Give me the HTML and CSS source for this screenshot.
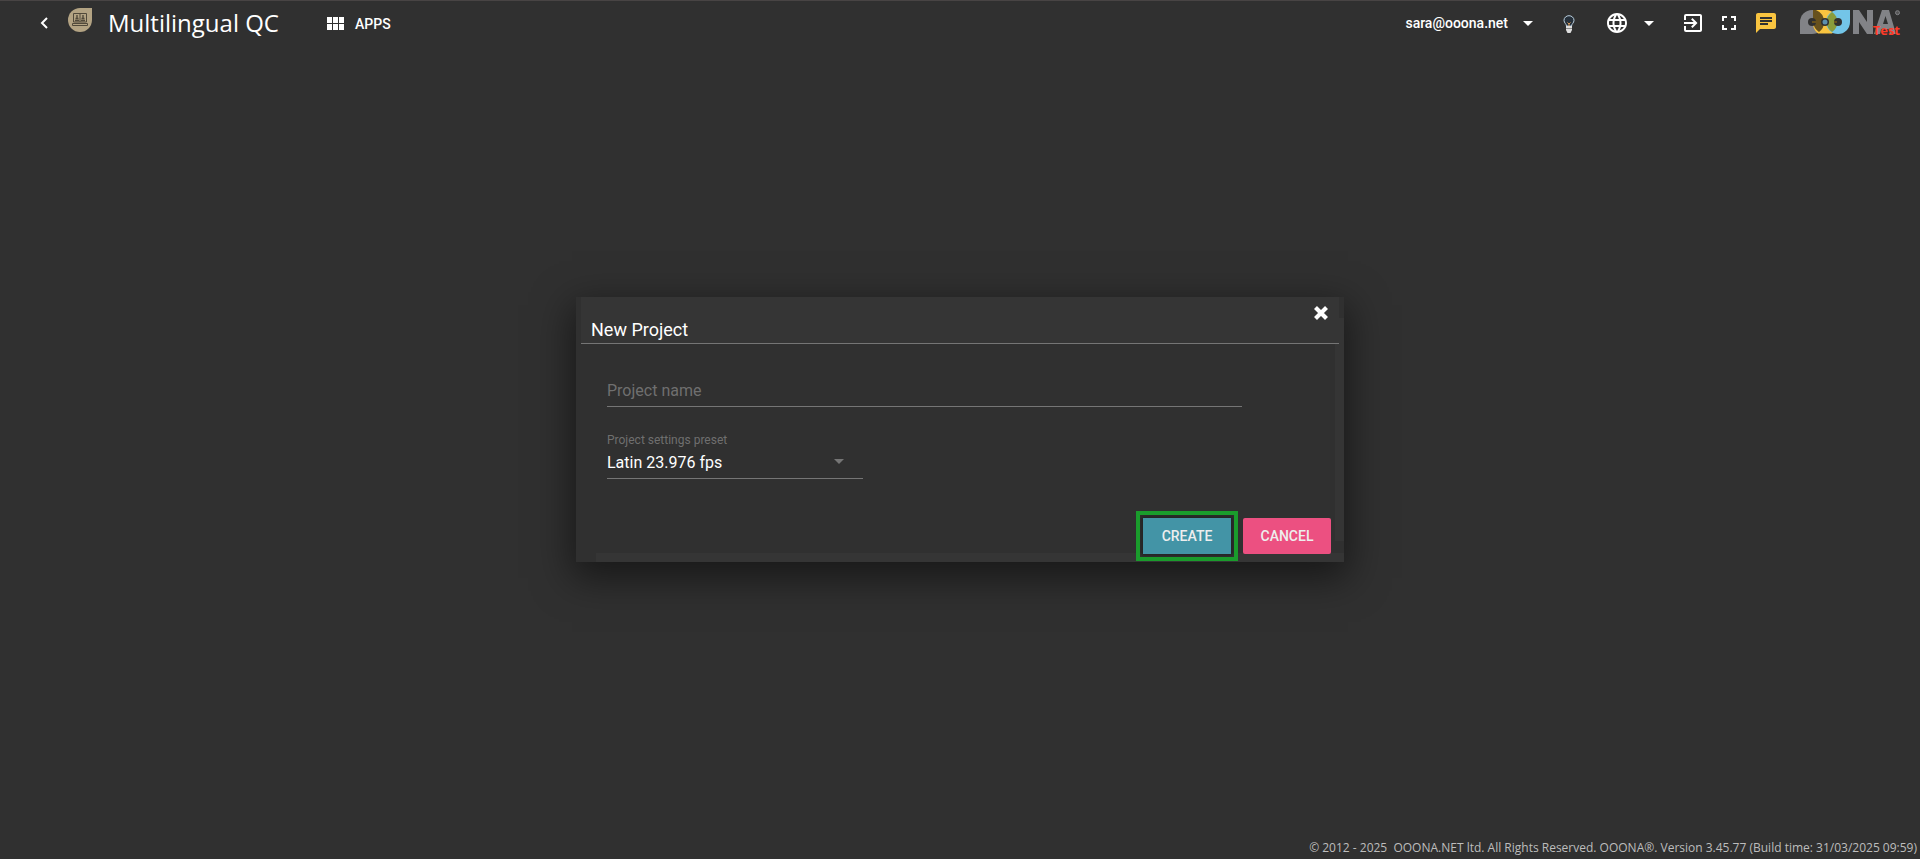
FILE: index.html
```
<!DOCTYPE html>
<html lang="en">
<head>
  <meta charset="UTF-8">
  <title>Multilingual QC</title>
  <link rel="stylesheet" href="styles.css">
</head>
<body>

<header class="topbar">
  <button class="icon-btn back" aria-label="Back">
    <svg width="8" height="12" viewBox="0 0 8 12"><path d="M7 1L2 6l5 5" fill="none" stroke="#fff" stroke-width="2"/></svg>
  </button>
  <svg class="app-logo" width="24" height="24" viewBox="0 0 24 24">
    <path d="M12 0h12v12a12 12 0 1 1-12-12z" fill="#b3a383"/>
    <g fill="none" stroke="#51493a">
      <path d="M5.500 14V5.500h13V14zM12 5.500V14M4.500 15.500h15v2h-15z"/>
      <path d="M7 12.500h4M13 12.500h4M7.500 10.500h3M13.500 10.500h3M9 7v3M15 7v3" stroke-width="1.400"/>
    </g>
  </svg>
  <h1>Multilingual QC</h1>
  <button class="apps">
    <svg width="17" height="13" viewBox="0 0 17 13" fill="#fff"><path d="M0 0h5v6H0zM6 0h5v6H6zM12 0h5v6h-5zM0 7h5v6H0zM6 7h5v6H6zM12 7h5v6h-5z"/></svg>
    APPS
  </button>

  <div class="tools">
    <button class="user">sara@ooona.net <span class="caret"></span></button>
    <button class="icon-btn bulb" aria-label="Tips">
      <svg width="12" height="18" viewBox="0 0 12 18">
        <path d="M3.500 11C3.500 9 1 8 1 5.300a5 4.600 0 0 1 10 0C11 8 8.500 9 8.500 11z" fill="#26303a" stroke="#b9cfdf"/>
        <path d="M4.500 7.500L6 9l1.500-1.500M6 9v2" fill="none" stroke="#d89a58"/>
        <path d="M3 11h6v4l-1.500 3h-3L3 15z" fill="#dedede"/>
        <path d="M3 13.500h6" stroke="#8b8b8b"/>
      </svg>
    </button>
    <button class="language" aria-label="Language">
      <svg width="24" height="24" viewBox="0 0 24 24" fill="#fff"><path d="M11.990 2C6.470 2 2 6.480 2 12s4.470 10 9.990 10C17.520 22 22 17.520 22 12S17.520 2 11.990 2zm6.930 6h-2.950a15.650 15.650 0 0 0-1.380-3.560A8.030 8.030 0 0 1 18.920 8zM12 4.040c.83 1.200 1.480 2.530 1.910 3.960h-3.820c.43-1.430 1.080-2.760 1.910-3.960zM4.260 14C4.100 13.360 4 12.690 4 12s.1-1.360.26-2h3.380c-.08.66-.14 1.320-.14 2s.06 1.340.14 2H4.260zm.82 2h2.950c.32 1.250.78 2.450 1.380 3.560A7.990 7.990 0 0 1 5.080 16zm2.950-8H5.080a7.990 7.990 0 0 1 4.330-3.560A15.650 15.650 0 0 0 8.030 8zM12 19.960c-.83-1.200-1.480-2.530-1.910-3.960h3.820c-.43 1.430-1.080 2.760-1.910 3.960zM14.340 14H9.660c-.09-.66-.16-1.320-.16-2s.07-1.350.16-2h4.680c.09.65.16 1.320.16 2s-.07 1.340-.16 2zm.25 5.560c.6-1.110 1.060-2.310 1.380-3.560h2.950a8.030 8.030 0 0 1-4.330 3.560zM16.360 14c.08-.66.14-1.320.14-2s-.06-1.340-.14-2h3.380c.16.640.26 1.310.26 2s-.1 1.360-.26 2h-3.380z"/></svg>
      <span class="caret"></span>
    </button>
    <button class="icon-btn" aria-label="Sign out">
      <svg width="18" height="18" viewBox="3 3 18 18" fill="#fff"><path d="M10.090 15.590L11.500 17l5-5-5-5-1.410 1.410L12.670 11H3v2h9.670l-2.580 2.590zM19 3H5a2 2 0 0 0-2 2v4h2V5h14v14H5v-4H3v4a2 2 0 0 0 2 2h14c1.100 0 2-.9 2-2V5c0-1.100-.9-2-2-2z"/></svg>
    </button>
    <button class="icon-btn" aria-label="Full screen">
      <svg width="14" height="14" viewBox="5 5 14 14" fill="#fff"><path d="M7 14H5v5h5v-2H7v-3zm-2-4h2V7h3V5H5v5zm12 7h-3v2h5v-5h-2v3zM14 5v2h3v3h2V5h-5z"/></svg>
    </button>
    <button class="icon-btn" aria-label="Messages">
      <svg width="20" height="20" viewBox="2 2 20 20" fill="#f9c440"><path d="M20 2H4c-1.100 0-1.990.9-1.990 2L2 22l4-4h14c1.100 0 2-.9 2-2V4c0-1.100-.9-2-2-2zM6 9h12v2H6V9zm8 5H6v-2h8v2zm4-6H6V6h12v2z"/></svg>
    </button>
    <div class="brand" role="img" aria-label="OOONA">
      <svg width="100" height="26" viewBox="0 0 100 26">
        <path d="M12 0h12v12a12 12 0 0 1-12 12H0V12A12 12 0 0 1 12 0z" fill="#828387"/>
        <path d="M13 0h13a12 12 0 0 1 12 12 12 12 0 0 1-6 11.500H18A13 13 0 0 1 13 12z" fill="#f9c440"/>
        <path d="M13 0h3a13 13 0 0 1 8 12 12 12 0 0 1-5 10 14 14 0 0 1-6-10z" fill="#67511d"/>
        <path d="M38 0h12v12a12 12 0 0 1-12 12 12 12 0 0 1 0-24z" fill="#73c5e8"/>
        <path d="M32 2a12 12 0 0 1 0 20 12 12 0 0 1 0-20z" fill="#899c3c"/>
        <g fill="#303030"><circle cx="12" cy="12" r="4"/><circle cx="25" cy="12" r="4"/><circle cx="38" cy="12" r="4"/></g>
        <circle cx="25" cy="12" r="2.500" fill="#5c8fae"/>
        <path d="M12 12h4M34 12h3" stroke="#67511d" stroke-width="2"/>
        <path d="M53 24V0h6l8 12V0h6v24h-6l-8-12v12zM74 24l8-24h7l7 24h-6l-1.500-5h-7L80 24zM83 14h5l-2.500-8z" fill="#828387" fill-rule="evenodd"/>
        <circle cx="97.500" cy="2.700" r="2" fill="#555" stroke="#828387"/>
      </svg>
      <span class="env">Test</span>
    </div>
  </div>
</header>

<main>
  <form class="dialog" role="dialog" aria-labelledby="dialogTitle">
    <div class="dialog-header">
      <h2 id="dialogTitle">New Project</h2>
      <button type="button" class="icon-btn close" aria-label="Close">
        <svg width="16" height="14" viewBox="0 0 16 14"><path d="M2.500 1.500l11 11M13.500 1.500l-11 11" stroke="#fff" stroke-width="4.200"/></svg>
      </button>
    </div>
    <div class="dialog-body">
      <input type="text" id="projectName" placeholder="Project name" aria-label="Project name">
      <label for="preset">Project settings preset</label>
      <div class="select-wrap">
        <select id="preset">
          <option>Latin 23.976 fps</option>
        </select>
        <span class="caret"></span>
      </div>
    </div>
    <div class="actions">
      <button type="submit" class="btn create">CREATE</button>
      <button type="button" class="btn cancel">CANCEL</button>
    </div>
  </form>
</main>

<footer>© 2012 - 2025 &nbsp;OOONA.NET ltd. All Rights Reserved. OOONA®. Version 3.45.77 (Build time: 31/03/2025 09:59)</footer>

</body>
</html>
```
FILE: styles.css
```
* {
  box-sizing: border-box;
}
body {
  margin: 0;
  min-height: 100vh;
  display: grid;
  grid-template-rows: 48px 1fr 48px;
  background: #303030;
  color: #fff;
  font-family: Roboto, sans-serif;
}
button {
  padding: 0;
  border: none;
  background: none;
  color: #fff;
  font-family: inherit;
  font-size: 14px;
  font-weight: 500;
}
svg {
  display: block;
}
.topbar {
  display: flex;
  align-items: center;
  padding: 0 20px 4px 40px;
  border-top: 1px solid #484444;
}
.app-logo {
  margin: 0 16px 6px 20px;
}
h1 {
  margin: 0 48px 0 0;
  font: 400 24px "Open Sans", sans-serif;
}
.apps {
  display: flex;
  align-items: center;
  gap: 11px;
  margin-top: 2px;
}
.tools {
  display: flex;
  align-items: center;
  gap: 20px;
  margin-left: auto;
}
.user,
.language {
  display: flex;
  align-items: center;
  gap: 15px;
}
.bulb {
  margin: 2px 10px 0;
}
.language {
  margin-right: 10px;
}
.caret {
  width: 10px;
  height: 5px;
  margin-top: 2px;
  background: #fff;
  clip-path: polygon(0 0, 100% 0, 50% 100%);
}
.brand {
  position: relative;
  margin-left: 4px;
}
.env {
  position: absolute;
  right: 0;
  bottom: -2px;
  color: #ff3b28;
  font: 700 13px/16px "Open Sans", sans-serif;
}

main {
  display: grid;
  place-items: center;
}
.dialog {
  width: 40%;
  padding: 0 5px 8px;
  background:
    linear-gradient(#353535, #353535) right 21px / 9px 223px no-repeat,
    linear-gradient(#353535, #353535) 20px bottom / 100% 9px no-repeat,
    #303030;
  box-shadow: 0 12px 36px 4px rgba(0, 0, 0, 0.5);
}
.dialog-header {
  display: flex;
  justify-content: space-between;
  padding: 9px 10px 0;
  height: 47px;
  background: #353535;
  border-bottom: 1px solid #757575;
}
h2 {
  margin: 14px 0 0;
  font-size: 18px;
  line-height: 20px;
  font-weight: 400;
}
.close {
  align-self: flex-start;
}
.dialog-body {
  padding: 32px 97px 39px 26px;
}
input,
select {
  display: block;
  width: 100%;
  height: 31px;
  padding: 0 0 1px;
  border: none;
  border-bottom: 1px solid #757575;
  border-radius: 0;
  background: none;
  color: #fff;
  font: 400 16px Roboto, sans-serif;
  outline: none;
}
input::placeholder {
  color: #6f6f6f;
}
label {
  display: block;
  margin-top: 25px;
  color: #6f6f6f;
  font-size: 12px;
  line-height: 16px;
}
.select-wrap {
  position: relative;
  width: 256px;
}
select {
  appearance: none;
}
.select-wrap .caret {
  position: absolute;
  right: 19px;
  top: 9px;
  background: #757575;
  pointer-events: none;
}
.actions {
  display: flex;
  justify-content: flex-end;
  gap: 12px;
  padding-right: 8px;
}
.btn {
  width: 88px;
  height: 36px;
  border-radius: 2px;
  color: #eee;
}
.create {
  background: #4394a6;
  box-shadow: 0 0 4px 2px #222;
  outline: 4px solid #1a9c2c;
  outline-offset: 3px;
  /* keeps the ring's corners square */
  border-radius: 0;
}
.cancel {
  background: #ec5081;
}

footer {
  align-self: end;
  padding: 0 3px 3px;
  color: #bdbdbd;
  font: 12px/16px "Open Sans", sans-serif;
  text-align: right;
}
```
